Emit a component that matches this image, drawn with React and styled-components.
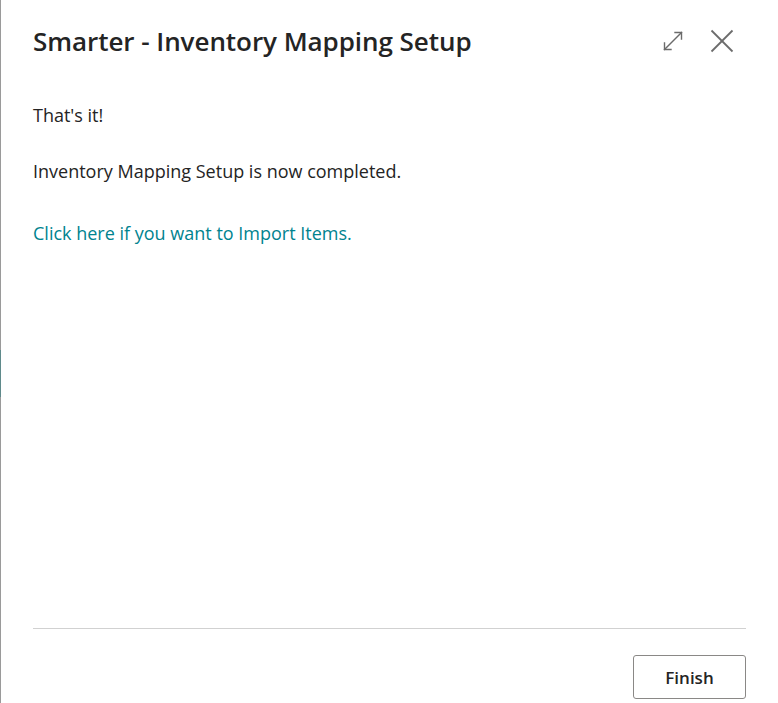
import React from "react";
import styled, { createGlobalStyle } from "styled-components";

const Global = createGlobalStyle`
  html, body { margin: 0; padding: 0; background: #fff; }
  body { font-family: "Open Sans", "Noto Sans", sans-serif; color: #212121; }
  * { box-sizing: border-box; }
`;

const Dialog = styled.div`
  position: relative;
  width: 778px;
  height: 703px;
  display: flex;
  flex-direction: column;
  border-left: 1px solid #9a9a9a;
  background: #fff;
  padding: 0 32px;
`;

const EdgeAccent = styled.span`
  position: absolute;
  left: -1px;
  top: 350px;
  width: 1px;
  height: 47px;
  background: #5f8a8b;
`;

const Header = styled.header`
  display: flex;
  align-items: center;
  justify-content: space-between;
  height: 82px;
`;

const Title = styled.h1`
  margin: 0;
  font-size: 26px;
  font-weight: 600;
  color: #242424;
  letter-spacing: -0.05px;
`;

const Actions = styled.div`
  display: flex;
  align-items: center;
  gap: 25px;
  margin-right: 12px;
`;

const IconButton = styled.button`
  border: 0;
  background: none;
  padding: 0;
  width: 24px;
  height: 24px;
  display: flex;
  align-items: center;
  justify-content: center;
  color: #6b6b6b;
  cursor: pointer;
`;

const Content = styled.main`
  flex: 1;
  display: flex;
  flex-direction: column;
  padding-top: 21px;
`;

const Para = styled.p`
  margin: 0 0 ${(p) => p.$gap || 0}px;
  font-size: 18px;
  line-height: 24px;
  color: #242424;
`;

const Link = styled.a`
  font-size: 18px;
  line-height: 24px;
  color: #00838f;
  text-decoration: none;
  cursor: pointer;
`;

const Footer = styled.footer`
  border-top: 1px solid #d1d1d1;
  display: flex;
  justify-content: flex-end;
  padding: 26px 0 4px;
`;

const Button = styled.button`
  width: 113px;
  height: 44px;
  border: 1px solid #8a8886;
  border-radius: 3px;
  background: #fff;
  font-family: inherit;
  font-size: 17px;
  font-weight: 600;
  color: #242424;
  cursor: pointer;
`;

const ExpandIcon = () => (
  <svg width="22" height="22" viewBox="0 0 22 22" fill="none" stroke="currentColor" strokeWidth="1.4" strokeLinecap="square">
    <path d="M2.5 19.5 L19.5 2.5" />
    <path d="M13 2.5 H19.5 V9" />
    <path d="M2.5 13 V19.5 H9" />
  </svg>
);

const CloseIcon = () => (
  <svg width="24" height="24" viewBox="0 0 24 24" fill="none" stroke="currentColor" strokeWidth="1.8">
    <path d="M1.5 1.5 L22.5 22.5" />
    <path d="M22.5 1.5 L1.5 22.5" />
  </svg>
);

export default function App() {
  return (
    <>
      <Global />
      <Dialog>
        <EdgeAccent />
        <Header>
          <Title>Smarter - Inventory Mapping Setup</Title>
          <Actions>
            <IconButton aria-label="Expand">
              <ExpandIcon />
            </IconButton>
            <IconButton aria-label="Close">
              <CloseIcon />
            </IconButton>
          </Actions>
        </Header>
        <Content>
          <Para $gap={32}>That's it!</Para>
          <Para $gap={38}>Inventory Mapping Setup is now completed.</Para>
          <div>
            <Link>Click here if you want to Import Items.</Link>
          </div>
        </Content>
        <Footer>
          <Button>Finish</Button>
        </Footer>
      </Dialog>
    </>
  );
}
